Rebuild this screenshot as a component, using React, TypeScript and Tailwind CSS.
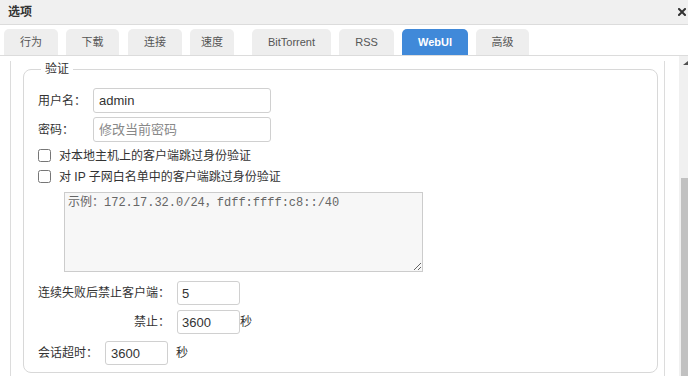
import React from "react";

const tabs = [
  { label: "行为", w: 54, ml: 4 },
  { label: "下载", w: 53, ml: 8 },
  { label: "连接", w: 54, ml: 9 },
  { label: "速度", w: 44, ml: 8 },
  { label: "BitTorrent", w: 79, ml: 18 },
  { label: "RSS", w: 55, ml: 8 },
  { label: "WebUI", w: 66, ml: 8, active: true },
  { label: "高级", w: 53, ml: 8 },
];

export default function App() {
  return (
    <div className="w-[688px] h-[376px] overflow-hidden bg-white text-[#333] font-[family-name:'Liberation_Sans','Noto_Sans_CJK_SC',sans-serif]">
      {/* title bar */}
      <div className="h-[25px] bg-[#f0f0f0] border-b border-[#dcdcdc] flex items-center justify-between pl-[8px] pr-[2px]">
        <span className="text-[12px] font-bold leading-[16px]">选项</span>
        <svg width="8" height="8" viewBox="0 0 8 8" className="mb-[1px]">
          <path d="M1 1 L7 7 M7 1 L1 7" stroke="#333" strokeWidth="2" strokeLinecap="square" />
        </svg>
      </div>
      {/* tabs */}
      <div className="h-[31px] flex items-end border-b border-[#dcdcdc]">
        {tabs.map((t) => (
          <div
            key={t.label}
            style={{ width: t.w, marginLeft: t.ml }}
            className={
              t.active
                ? "h-[26px] rounded-t-[5px] bg-[#4089d9] text-white font-bold text-[11px] flex items-center justify-center"
                : "h-[26px] rounded-t-[5px] bg-[#eeeeee] text-[#555] text-[11px] flex items-center justify-center"
            }
          >
            {t.label}
          </div>
        ))}
      </div>
      {/* body */}
      <div className="flex h-[320px]">
        <div className="w-[679px] pl-[10px] pr-[14px] h-full">
          <div className="h-full border-x border-[#dcdcdc] pl-[12px] pr-[6px]">
            <fieldset className="mt-[5px] border border-[#d8d8d8] rounded-[8px] px-[14px] pt-[11px] pb-[7px] m-0">
              <legend className="ml-[3px] px-[4px] text-[12px] leading-[16px]">验证</legend>
              <div className="grid grid-cols-[55px_178px] gap-y-[4px] text-[12px]">
                <div className="flex items-center">用户名：</div>
                <input
                  className="h-[25px] border border-[#d0d0d0] rounded-[3px] px-[5px] text-[13px] text-[#333] outline-none"
                  defaultValue="admin"
                />
                <div className="flex items-center">密码：</div>
                <input
                  className="h-[25px] border border-[#d0d0d0] rounded-[3px] px-[5px] text-[13px] text-[#333] placeholder:text-[#888] outline-none"
                  placeholder="修改当前密码"
                />
              </div>
              <div className="mt-[3px] h-[21px] flex items-center gap-[8px] text-[12px]">
                <input type="checkbox" className="m-0 w-[13px] h-[13px]" />
                <span>对本地主机上的客户端跳过身份验证</span>
              </div>
              <div className="h-[21px] flex items-center gap-[8px] text-[12px]">
                <input type="checkbox" className="m-0 w-[13px] h-[13px]" />
                <span>对 IP 子网白名单中的客户端跳过身份验证</span>
              </div>
              <textarea
                className="block mt-[5px] ml-[26px] w-[359px] h-[80px] bg-[#f7f7f7] border border-[#cccccc] pt-[2px] px-[3px] text-[12px] leading-[16px] font-[family-name:'Liberation_Mono','Noto_Sans_CJK_SC',monospace] placeholder:text-[#666] outline-none"
                placeholder="示例：172.17.32.0/24，fdff:ffff:c8::/40"
              />
              <div className="mt-[9px] grid grid-cols-[139px_auto] gap-y-[5px] text-[12px]">
                <div className="flex items-center">连续失败后禁止客户端：</div>
                <div className="flex items-center">
                  <input
                    className="w-[63px] h-[24px] border border-[#d0d0d0] rounded-[3px] px-[4px] text-[13px] text-[#333] outline-none"
                    defaultValue="5"
                  />
                </div>
                <div className="flex items-center justify-end pr-[7px]">禁止：</div>
                <div className="flex items-center">
                  <input
                    className="w-[63px] h-[24px] border border-[#d0d0d0] rounded-[3px] px-[4px] text-[13px] text-[#333] outline-none"
                    defaultValue="3600"
                  />
                  <span>秒</span>
                </div>
              </div>
              <div className="mt-[7px] flex items-center text-[12px]">
                <div className="w-[67px]">会话超时：</div>
                <input
                  className="w-[63px] h-[24px] border border-[#d0d0d0] rounded-[3px] px-[5px] text-[13px] text-[#333] outline-none"
                  defaultValue="3600"
                />
                <span className="ml-[8px]">秒</span>
              </div>
            </fieldset>
          </div>
        </div>
        <div className="w-[9px] h-full bg-[#f0f0f0] flex flex-col">
          <div className="h-[122px] pt-[5px] pl-[4px]">
            <svg width="5" height="4" viewBox="0 0 5 4">
              <path d="M0 4 L5 4 L5 0 Z" fill="#505050" />
            </svg>
          </div>
          <div className="flex-1 ml-[2px] bg-[#c1c1c1]" />
        </div>
      </div>
    </div>
  );
}
